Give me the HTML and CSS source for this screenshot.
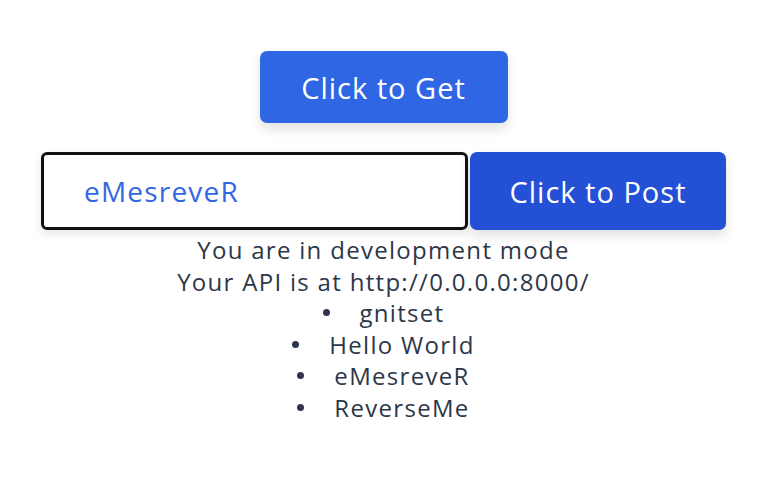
FILE: index.html
```html
<!DOCTYPE html>
<html>
<head>
<meta charset="utf-8">
<link rel="stylesheet" href="styles.css">
</head>
<body>
<main class="app">
  <button class="btn btn-get">Click to Get</button>
  <div class="post-row">
    <div class="input-box"><span class="input-text">eMesreveR</span></div>
    <button class="btn btn-post">Click to Post</button>
  </div>
  <p class="line">You are in development mode</p>
  <p class="line">Your API is at http://0.0.0.0:8000/</p>
  <ul class="items">
    <li class="item">gnitset</li>
    <li class="item">Hello World</li>
    <li class="item">eMesreveR</li>
    <li class="item">ReverseMe</li>
  </ul>
</main>
</body>
</html>
```
FILE: styles.css
```css
html, body {
  margin: 0;
  padding: 0;
  background: #ffffff;
}
body {
  font-family: "Open Sans", Lato, sans-serif;
  color: #2d3748;
}
.app {
  display: flex;
  flex-direction: column;
  align-items: center;
  padding: 51px 0 0 5px;
}
.btn {
  font-family: inherit;
  border: none;
  color: #ffffff;
  border-radius: 7px;
  cursor: pointer;
  letter-spacing: 1px;
  padding: 0;
}
.btn-get {
  width: 248px;
  height: 72px;
  background: #2f66e4;
  font-size: 29px;
  box-shadow: 0 6px 12px rgba(0, 0, 0, 0.12);
}
.post-row {
  display: flex;
  align-items: stretch;
  gap: 2px;
  margin-top: 29px;
}
.input-box {
  box-sizing: border-box;
  width: 427px;
  height: 78px;
  border: 3px solid #111111;
  border-radius: 6px;
  display: flex;
  align-items: center;
  padding-left: 40px;
  box-shadow: 0 4px 10px rgba(0, 0, 0, 0.10);
}
.input-text {
  font-size: 28px;
  letter-spacing: 1.2px;
  color: #3366e2;
}
.btn-post {
  width: 256px;
  height: 78px;
  background: #2450d6;
  font-size: 29px;
  box-shadow: 0 6px 12px rgba(0, 0, 0, 0.12);
}
.line {
  margin: 0;
  font-size: 24px;
  letter-spacing: 1.3px;
  line-height: 31.5px;
}
.line:first-of-type {
  margin-top: 4px;
}
.items {
  list-style: none;
  margin: 0;
  padding: 0;
  display: flex;
  flex-direction: column;
  align-items: center;
}
.item {
  display: flex;
  align-items: center;
  font-size: 24px;
  letter-spacing: 1.3px;
  line-height: 31.5px;
}
.item::before {
  content: "";
  width: 7px;
  height: 7px;
  border-radius: 50%;
  background: #2d3748;
  margin-right: 30px;
}
```
